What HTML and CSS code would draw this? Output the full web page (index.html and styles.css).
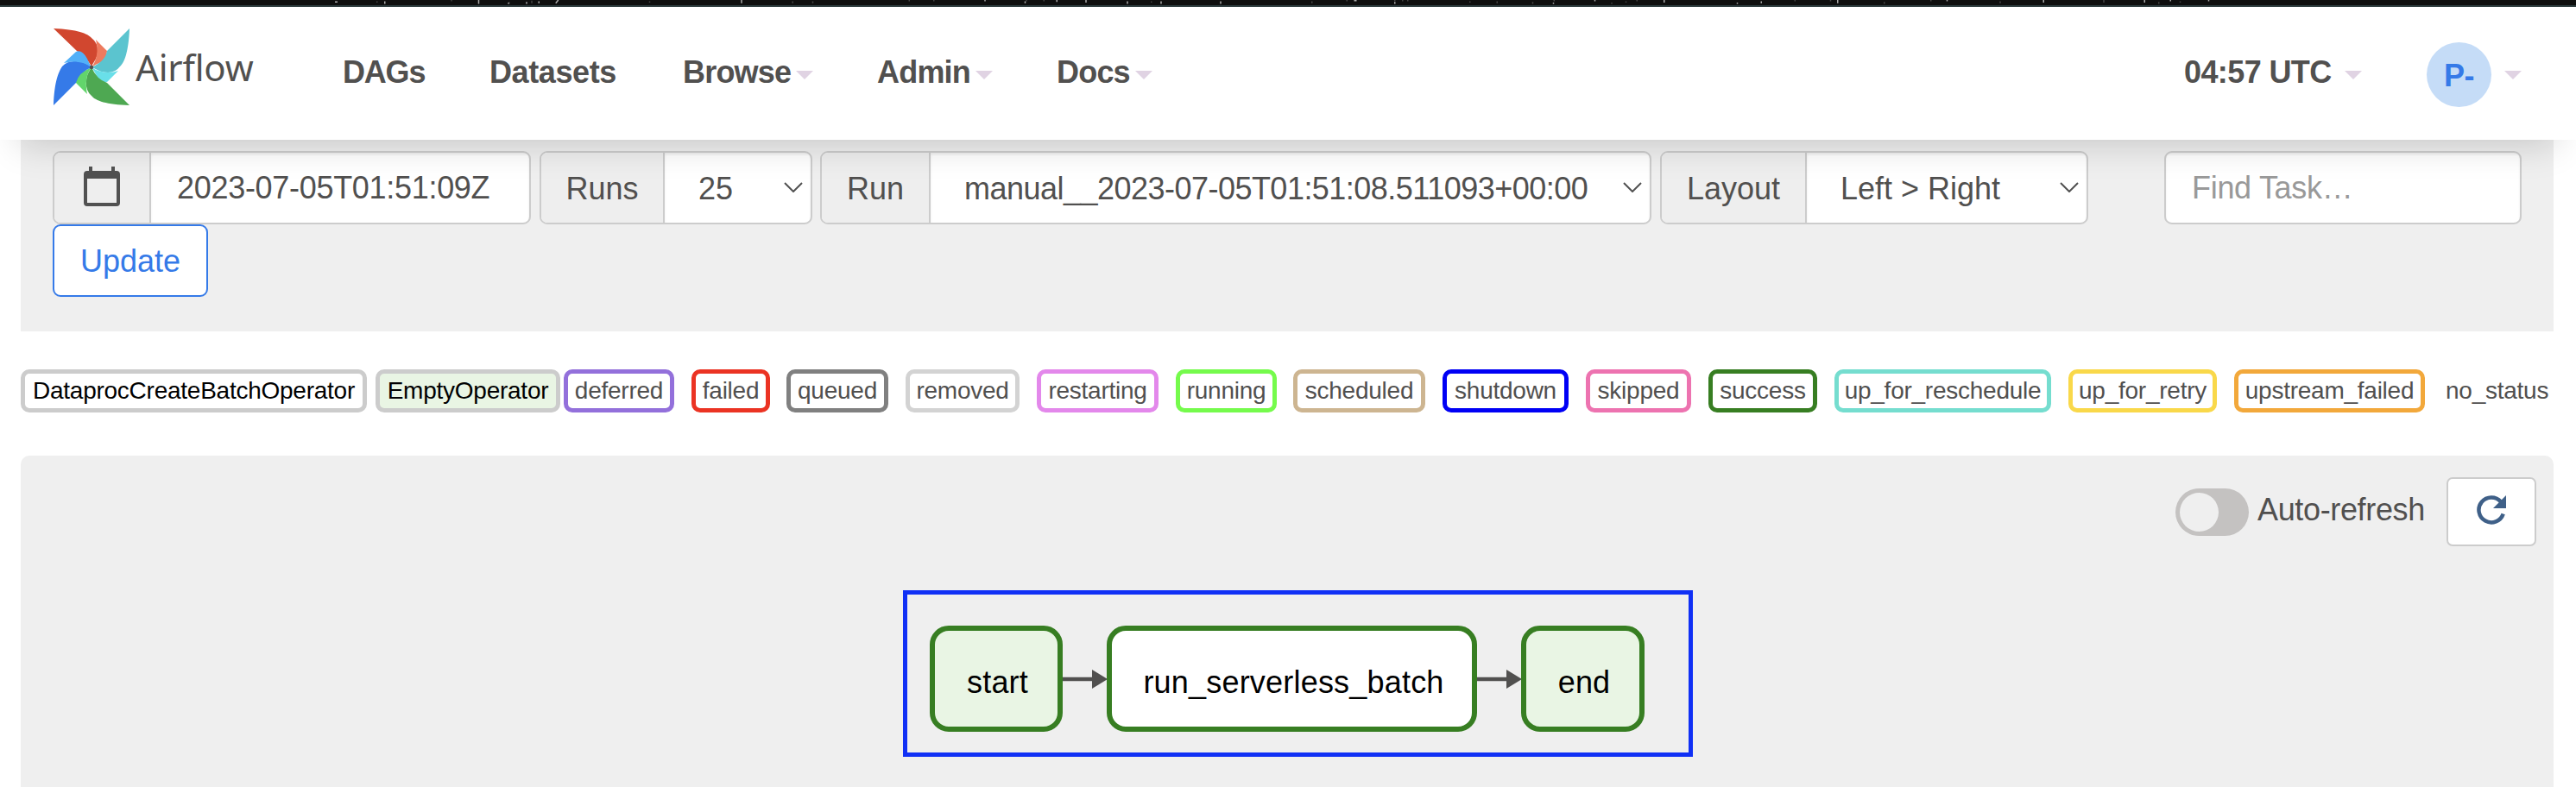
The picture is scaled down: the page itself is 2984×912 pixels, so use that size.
FILE: index.html
```html
<!DOCTYPE html>
<html lang="en">
<head>
<meta charset="utf-8">
<title>Airflow</title>
<link rel="stylesheet" href="styles.css">
</head>
<body>
<svg class="desktop-strip" viewBox="0 0 2984 8">
  <path class="speck dim" d="M85 2v2M200 0v2M289 3v3M324 1v4M506 2v2M727 2v3M758 2v3M907 0v2M945 0v2M1088 0v2M1115 0v2M1281 2v2M1529 2v3M1583 0v2M1657 0v2M1669 0v2M1677 0v2M1773 2v2M1815 2v3M1870 3v3M1903 0v2M1992 4v2M2014 2v2M2031 0v2M2275 0v2M2330 0v2M2413 3v3M2485 0v2M2592 2v3M2752 0v4M2837 3v3M2870 2v2"/>
  <path class="speck" d="M20 3h4M97 2v4M242 0v6M288 4v2M316 3v3M335 2v3M361 5l4-5M648 0v5M1024 0v2M1086 2v3M1135 0v3M1180 0v4M1244 2v4M1296 2v4M1388 2v4M1594 1h4M1657 3v3M1902 4v2M1966 0v2M2073 0v4M2186 4v2M2223 2v3M2341 0v5M2510 0v2M2659 0v4M2815 0v4M2855 0v2M2914 0v2"/>
</svg>
<header class="navbar">
  <a class="brand">
    <svg class="pinwheel" viewBox="0 0 88 89">
      <path fill="#d1472f" d="M0 0C27 1 40 6 44 11Q52 17 51 27C51 34 47 38 44 44Q38 33 27 26Z"/>
      <path fill="#ed7b5e" d="M49 13L62 26Q62 36 53 40Q48 42 44 45C51 36 52 24 49 13Z"/>
      <path fill="#5bc4cf" d="M88 0C87 27 82 40 77 44Q72 51 63 51C54 51 50 47 44 45Q60 38 62 26Z"/>
      <path fill="#69dfe9" d="M75 49L62 62Q54 64 49 53Q47 49 44 45C54 52 66 52 75 49Z"/>
      <path fill="#4ea852" d="M88 89C61 88 49 84 44 78Q37 72 38 62C38 54 41 50 44 45Q50 59 62 63Z"/>
      <path fill="#62d56b" d="M39 76L26 63Q25 54 36 49Q40 47 44 45C37 54 37 65 39 76Z"/>
      <path fill="#357ae8" d="M0 89C1 61 6 50 10 44Q16 37 26 38C34 38 39 41 44 45Q29 51 26 63Z"/>
      <path fill="#52b0f8" d="M12 40L26 27Q33 24 39 35Q41 40 44 45C35 38 23 37 12 40Z"/>
      <circle cx="44" cy="45" r="2.2" fill="#51504f"/>
    </svg>
    <span class="brand-name">Airflow</span>
  </a>
  <nav class="menu">
    <a class="item dags">DAGs</a>
    <a class="item datasets">Datasets</a>
    <a class="item browse">Browse<i class="caret"></i></a>
    <a class="item admin">Admin<i class="caret"></i></a>
    <a class="item docs">Docs<i class="caret"></i></a>
  </nav>
  <div class="account">
    <a class="item clock">04:57 UTC<i class="caret"></i></a>
    <span class="avatar">P-</span><i class="caret"></i>
  </div>
</header>
<main>
  <section class="filters">
    <div class="filter-row">
      <div class="group g-date">
        <span class="addon"><svg class="calendar" viewBox="0 0 42 46"><path fill="#515151" fill-rule="evenodd" d="M6 0h4v5h22V0h4v5h2a4 4 0 0 1 4 4v33a4 4 0 0 1-4 4H4a4 4 0 0 1-4-4V9a4 4 0 0 1 4-4h2zM4 14v28h34V14z"/></svg></span>
        <span class="value"><span class="t">2023-07-05T01:51:09Z</span></span>
      </div>
      <div class="group g-runs">
        <span class="addon">Runs</span>
        <span class="value select"><span class="t">25</span><svg class="chevron" viewBox="0 0 22 12"><path d="M1 1l10 10L21 1"/></svg></span>
      </div>
      <div class="group g-run">
        <span class="addon">Run</span>
        <span class="value select"><span class="t">manual__2023-07-05T01:51:08.511093+00:00</span><svg class="chevron" viewBox="0 0 22 12"><path d="M1 1l10 10L21 1"/></svg></span>
      </div>
      <div class="group g-layout">
        <span class="addon">Layout</span>
        <span class="value select"><span class="t">Left &gt; Right</span><svg class="chevron" viewBox="0 0 22 12"><path d="M1 1l10 10L21 1"/></svg></span>
      </div>
      <div class="group g-find"><span class="value placeholder">Find Task…</span></div>
    </div>
    <button class="update">Update</button>
  </section>
  <section class="legend">
    <span class="tag operator dataproc">DataprocCreateBatchOperator</span>
    <span class="tag operator empty">EmptyOperator</span>
    <span class="tag deferred">deferred</span>
    <span class="tag failed">failed</span>
    <span class="tag queued">queued</span>
    <span class="tag removed">removed</span>
    <span class="tag restarting">restarting</span>
    <span class="tag running">running</span>
    <span class="tag scheduled">scheduled</span>
    <span class="tag shutdown">shutdown</span>
    <span class="tag skipped">skipped</span>
    <span class="tag success">success</span>
    <span class="tag reschedule">up_for_reschedule</span>
    <span class="tag retry">up_for_retry</span>
    <span class="tag upstream">upstream_failed</span>
    <span class="tag none">no_status</span>
  </section>
  <section class="graph">
    <div class="refresh-bar">
      <span class="toggle"><i class="knob"></i></span>
      <span class="refresh-label">Auto-refresh</span>
      <button class="refresh"><svg class="reload" viewBox="0 0 34 34"><path class="arc" d="M30.7 21.5A14.5 14.5 0 1 1 28 7.5"/><path fill="#3f6088" d="M34 0v15H19z"/></svg></button>
    </div>
    <div class="dag">
      <span class="node light n-start">start</span>
      <svg class="edge" viewBox="0 0 51 24"><path fill="#51504f" d="M0 9.8h34V1l18 11-18 11V14.2H0z"/></svg>
      <span class="node n-batch">run_serverless_batch</span>
      <svg class="edge" viewBox="0 0 51 24"><path fill="#51504f" d="M0 9.8h34V1l18 11-18 11V14.2H0z"/></svg>
      <span class="node light n-end">end</span>
    </div>
  </section>
</main>
</body>
</html>
```
FILE: styles.css
```css
* { box-sizing: border-box; }
body {
  margin: 0;
  height: 912px;
  overflow: hidden;
  background: #fff;
  color: #51504f;
  font: 36px/1.2 "Liberation Sans", Arial, sans-serif;
}
.desktop-strip { display: block; width: 100%; height: 8px; background: #0e0e0e; border-bottom: 2px solid #2b3a3c; }
.speck { fill: none; stroke: #aaa; stroke-width: 2; }
.speck.dim { stroke: #444; }
.navbar {
  position: relative;
  z-index: 2;
  display: flex;
  height: 154px;
  padding: 0 63px 0 62px;
  background: #fff;
  box-shadow: 0 28px 40px -22px rgba(0, 0, 0, .17);
}
.brand { display: flex; width: 335px; }
.pinwheel { width: 88px; height: 89px; margin-top: 25px; }
.brand-name { margin: 41px 0 0 7px; font: 42px/57px "Noto Sans", sans-serif; letter-spacing: -.2px; }
.menu { display: flex; flex: 1; }
.item { display: flex; padding-top: 55px; line-height: 42px; font-weight: bold; white-space: nowrap; letter-spacing: -.8px; }
.caret { border: 10px solid transparent; border-top-color: #e0d3e3; border-bottom: 0; height: 10px; margin: 19px 0 0 6px; }
.dags { width: 170px; letter-spacing: -1.2px; }
.datasets { width: 224px; letter-spacing: -.4px; }
.browse { width: 225px; }
.admin { width: 208px; }
.account { display: flex; }
.clock { width: 281px; letter-spacing: -.6px; }
.clock .caret { margin-left: 15px; }
.avatar {
  width: 75px;
  height: 75px;
  margin-top: 41px;
  border-radius: 50%;
  background: #c5dcf7;
  color: #357ae8;
  font-weight: bold;
  line-height: 77px;
  text-align: center;
  letter-spacing: -.6px;
}
.account > .caret { margin: 74px 0 0 15px; }
main { padding: 0 26px 0 24px; }
.filters { height: 222px; padding: 13px 37px 0; background: #efefef; }
.filter-row { display: flex; height: 85px; }
.group {
  display: flex;
  overflow: hidden;
  border: 2px solid #ccc;
  border-radius: 9px;
  background: #fff;
}
.g-date { width: 554px; margin-right: 10px; }
.g-runs { width: 316px; margin-right: 9px; }
.g-run { width: 963px; margin-right: 10px; }
.g-layout { width: 496px; margin-right: 88px; }
.g-find { width: 414px; }
.addon {
  display: flex;
  align-items: center;
  justify-content: center;
  background: #eee;
  border-right: 2px solid #ccc;
  line-height: 79px;
  padding-top: 2px;
}
.g-date .addon { width: 112px; }
.g-runs .addon { width: 143px; }
.g-run .addon { width: 126px; }
.g-layout .addon { width: 168px; }
.calendar { width: 42px; height: 46px; margin-top: -5px; }
.value {
  flex: 1;
  display: flex;
  justify-content: space-between;
  padding: 0 9px 0 39px;
  line-height: 84px;
  white-space: nowrap;
  box-shadow: inset 0 2px 3px rgba(0, 0, 0, .075);
}
.g-date .value, .g-find .value { padding-left: 30px; line-height: 82px; letter-spacing: -.3px; }
.g-run .value { letter-spacing: -.52px; }
.placeholder { color: #999; }
.chevron { width: 22px; height: 12px; margin-top: 34px; fill: none; stroke: #515151; stroke-width: 2; }
.update {
  display: block;
  width: 180px;
  height: 84px;
  padding: 2px 0 0;
  border: 2px solid #357ae8;
  border-radius: 9px;
  background: #fff;
  color: #357ae8;
  font: inherit;
}
.legend { display: flex; height: 144px; padding-top: 44px; }
.tag {
  flex: none;
  height: 50px;
  margin-right: 20px;
  border: 5px solid;
  border-radius: 10px;
  font-size: 28px;
  line-height: 40px;
  text-align: center;
  white-space: nowrap;
  letter-spacing: -.25px;
  -webkit-text-fill-color: #51504f;
}
.tag.operator { -webkit-text-fill-color: #000; border-color: #ccc; }
.tag.dataproc { width: 401px; margin-right: 10px; }
.tag.empty { width: 214px; margin-right: 4px; background: #e9f5e4; }
.deferred { width: 128px; color: mediumpurple; }
.failed { width: 91px; color: #eb3323; }
.tag.failed { margin-right: 19px; }
.queued { width: 118px; color: gray; }
.removed { width: 132px; color: lightgrey; }
.restarting { width: 141px; color: #e388eb; }
.running { width: 117px; color: #75fb4c; }
.tag.running { margin-right: 19px; }
.scheduled { width: 153px; color: #cdb591; }
.shutdown { width: 146px; color: #0000f5; }
.skipped { width: 122px; color: #ed73b0; }
.success { width: 126px; color: #377e22; }
.reschedule { width: 251px; color: #75ddcf; }
.retry { width: 172px; color: #f9d84a; }
.upstream { width: 221px; color: #f2a83b; }
.tag.none { width: 129px; margin: 0 0 0 -1px; border-color: transparent; }
.graph { height: 384px; padding: 25px 20px 0 0; border-radius: 10px 10px 0 0; background: #efefef; }
.refresh-bar { display: flex; justify-content: flex-end; height: 131px; }
.toggle { width: 85px; height: 55px; margin-top: 13px; padding: 5px; border-radius: 28px; background: #c4c2c1; }
.knob { display: block; width: 45px; height: 45px; border-radius: 50%; background: #efefef; }
.refresh-label { width: 229px; padding: 16px 0 0 10px; white-space: nowrap; letter-spacing: -.35px; }
.refresh {
  width: 104px;
  height: 80px;
  padding: 0 0 4px;
  border: 2px solid #ccc;
  border-radius: 7px;
  background: #fff;
  line-height: 0;
}
.reload { width: 34px; height: 34px; }
.arc { fill: none; stroke: #3f6088; stroke-width: 4.5; }
.dag {
  display: flex;
  align-items: center;
  width: 915px;
  height: 193px;
  margin-left: 1022px;
  padding: 12px 0 0 26px;
  border: 5px solid #1030f5;
}
.node {
  height: 123px;
  border: 6px solid #377e22;
  border-radius: 22px;
  background: #fff;
  color: #000;
  line-height: 119px;
  text-align: center;
  letter-spacing: .2px;
}
.light { background: #e9f5e4; }
.n-start { width: 154px; padding-left: 3px; }
.n-batch { width: 429px; padding-left: 4px; }
.n-end { width: 143px; padding-left: 3px; }
.edge { width: 51px; height: 24px; overflow: visible; }
```
